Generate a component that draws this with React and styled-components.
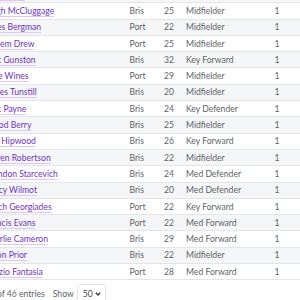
import React, { useLayoutEffect, useRef } from 'react';
import styled, { createGlobalStyle } from 'styled-components';

const players = [
  ['Darcy Fort', 'Bris', 31, 'Ruck', 1],
  ['Hugh McCluggage', 'Bris', 25, 'Midfielder', 1],
  ['Miles Bergman', 'Port', 22, 'Midfielder', 1],
  ['Willem Drew', 'Port', 25, 'Midfielder', 1],
  ['Jack Gunston', 'Bris', 32, 'Key Forward', 1],
  ['Ollie Wines', 'Port', 29, 'Midfielder', 1],
  ['James Tunstill', 'Bris', 20, 'Midfielder', 1],
  ['Jack Payne', 'Bris', 24, 'Key Defender', 1],
  ['Jarrod Berry', 'Bris', 25, 'Midfielder', 1],
  ['Eric Hipwood', 'Bris', 26, 'Key Forward', 1],
  ['Deven Robertson', 'Bris', 22, 'Midfielder', 1],
  ['Brandon Starcevich', 'Bris', 24, 'Med Defender', 1],
  ['Darcy Wilmot', 'Bris', 20, 'Med Defender', 1],
  ['Mitch Georgiades', 'Port', 22, 'Key Forward', 1],
  ['Francis Evans', 'Port', 22, 'Med Forward', 1],
  ['Charlie Cameron', 'Bris', 29, 'Med Forward', 1],
  ['Jaxon Prior', 'Bris', 22, 'Midfielder', 1],
  ['Orazio Fantasia', 'Port', 28, 'Med Forward', 1],
];

const GlobalStyle = createGlobalStyle`
  html, body { margin: 0; padding: 0; background: #fff; }
  body { font-family: Lato, "Liberation Sans", sans-serif; }
`;

const Viewport = styled.div`
  width: 300px;
  height: 300px;
  overflow: hidden;
  background: #fff;
`;

const Content = styled.div`
  width: 420px;
  padding-bottom: 20px;
`;

const Table = styled.table`
  border-collapse: collapse;
  table-layout: fixed;
  width: 400px;
  font-size: 8.6px;
  color: #5f6368;
  border-bottom: 1px solid #e3e5e8;
`;

const Row = styled.tr`
  height: 16.3px;
  background: ${p => (p.$striped ? '#f5f6f8' : '#fff')};
`;

const Cell = styled.td`
  box-sizing: border-box;
  padding: 0 6px;
  border-top: 1px solid #e3e5e8;
  white-space: nowrap;
  overflow: hidden;
  text-align: ${p => (p.$num ? 'right' : 'left')};
  width: ${p => p.$w}px;
`;

const CountCell = styled(Cell)`
  padding-right: 40.5px;
`;

const NameLink = styled.a`
  color: #6d35bd;
  text-decoration: underline;
  text-decoration-color: #dcc8f2;
  text-underline-offset: 1.5px;
`;

const Footer = styled.div`
  display: flex;
  align-items: center;
  gap: 8px;
  margin-top: 4px;
  padding-left: 13px;
  font-size: 8.6px;
  color: #5f6368;
`;

const Info = styled.span`
  white-space: nowrap;
`;

const Length = styled.label`
  display: flex;
  align-items: center;
  gap: 3px;
`;

const Select = styled.div`
  display: flex;
  align-items: center;
  justify-content: space-between;
  width: 29px;
  height: 19px;
  padding: 0 4px 0 5px;
  box-sizing: border-box;
  border: 1px solid #dfe2e6;
  border-radius: 3px;
  color: #444;
`;

function Chevron() {
  return (
    <svg width="6" height="4" viewBox="0 0 6 4">
      <path d="M0.8 0.8 L3 3 L5.2 0.8" fill="none" stroke="#333" strokeWidth="1.3" />
    </svg>
  );
}

export default function App() {
  const ref = useRef(null);
  useLayoutEffect(() => {
    ref.current.scrollLeft = 80;
    ref.current.scrollTop = 14.4;
  }, []);
  return (
    <>
      <GlobalStyle />
      <Viewport ref={ref}>
        <Content>
          <Table>
            <tbody>
              {players.map(([name, team, age, pos, n], i) => (
                <Row key={name} $striped={i % 2 === 0}>
                  <Cell $w={59} $num>{i + 29}</Cell>
                  <Cell $w={144.5}><NameLink href="#">{name}</NameLink></Cell>
                  <Cell $w={26.5}>{team}</Cell>
                  <Cell $w={30} $num>{age}</Cell>
                  <Cell $w={80}>{pos}</Cell>
                  <CountCell $w={60} $num>{n}</CountCell>
                </Row>
              ))}
            </tbody>
          </Table>
          <Footer>
            <Info>Showing 1 to 46 of 46 entries</Info>
            <Length>
              Show
              <Select>50<Chevron /></Select>
            </Length>
          </Footer>
        </Content>
      </Viewport>
    </>
  );
}
